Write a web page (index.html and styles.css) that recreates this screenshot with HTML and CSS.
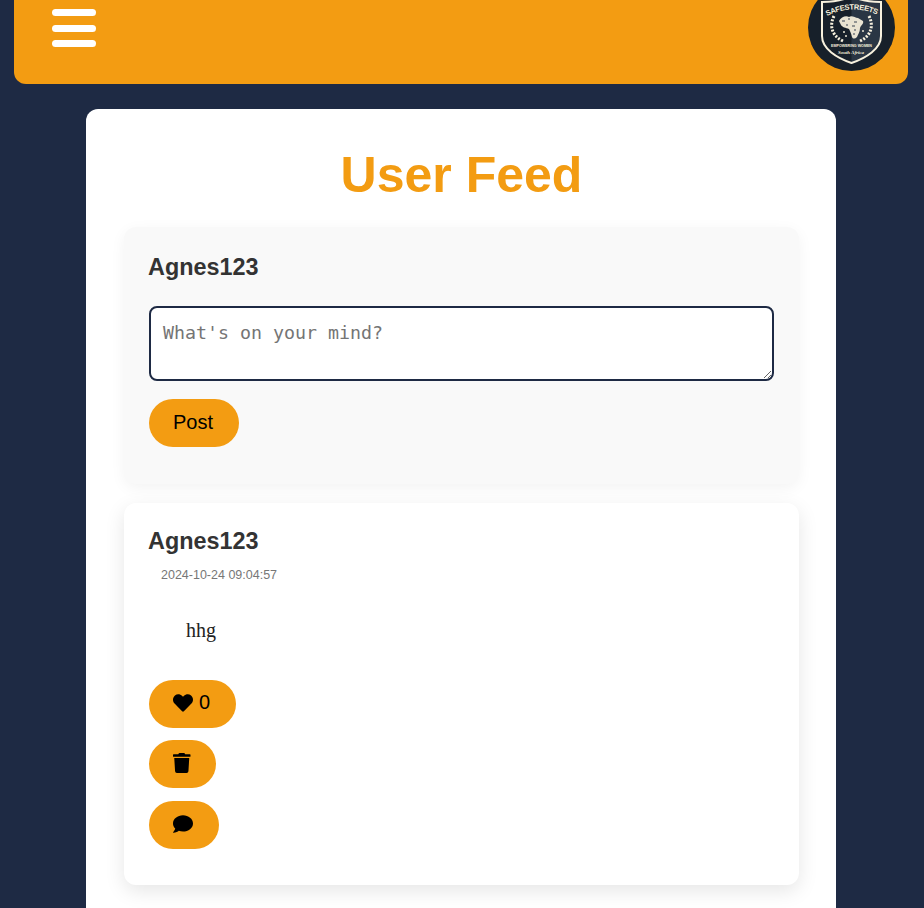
FILE: index.html
```html
<!DOCTYPE html>
<html lang="en">
<head>
<meta charset="utf-8">
<title>User Feed</title>
<link rel="stylesheet" href="styles.css">
</head>
<body>
<header class="topbar">
  <div class="burger"><span></span><span></span><span></span></div>
  <svg class="logo" viewBox="0 0 87 87">
    <defs><path id="arc" d="M17 33 Q43.500 19 70 31"/></defs>
    <circle cx="43.500" cy="43.500" r="43.500" fill="#17202a"/>
    <path d="M43.500 12 L73 18 V52 C73 65 58 74 43.500 79 Z" fill="#2a3644"/>
    <path d="M14 18 Q32 18 43.500 12 Q55 18 73 18 V52 C73 65 58 74 43.500 79 C29 74 14 65 14 52 Z" fill="none" stroke="#f7f1de" stroke-width="2"/>
    <text class="logo-title"><textPath href="#arc" startOffset="2" textLength="52" lengthAdjust="spacing">SAFESTREETS</textPath></text>
    <path d="M26 32 C21 42 24 52 35 57 M61 32 C66 42 63 52 52 57" fill="none" stroke="#f7f1de" stroke-width="3" stroke-dasharray="2 1.500"/>
    <path d="M31 37 C33 33 38 31 41 33 C44 31 47 34 50 34 L55 37 C56 40 53 41 52 44 C52 48 50 50 49 53 C47 55 45 55 44 53 C43 49 42 47 41 45 C38 44 34 43 33 41 Z" fill="#e9e3d2"/>
    <path d="M34 37 h3 M40 35 h2 M46 38 h3 M38 41 h2 M44 42 h3 M48 46 h-2 M45 50 h2" fill="none" stroke="#3b4552" stroke-width="1.200"/>
    <path d="M35 48 h2 M37 52 h2 M54 47 h2" fill="none" stroke="#e9e3d2" stroke-width="1.500"/>
    <text class="logo-small" x="23" y="63" textLength="41" lengthAdjust="spacingAndGlyphs">EMPOWERING WOMEN</text>
    <text class="logo-script" x="30" y="70" textLength="26" lengthAdjust="spacingAndGlyphs">South Africa</text>
  </svg>
</header>

<main class="panel">
  <h1 class="title">User Feed</h1>

  <section class="composer">
    <h3 class="name">Agnes123</h3>
    <textarea class="input" placeholder="What's on your mind?"></textarea>
    <button class="pill">Post</button>
  </section>

  <article class="post">
    <h3 class="name">Agnes123</h3>
    <p class="time">2024-10-24 09:04:57</p>
    <p class="body-text">hhg</p>
    <div class="actions">
      <button class="pill"><svg class="ico ico-gap" viewBox="0 0 512 512"><path d="M462.3 62.6C407.5 15.9 326 24.3 275.7 76.2L256 96.500l-19.700-20.300C186.100 24.300 104.500 15.900 49.700 62.600c-62.800 53.600-66.100 149.800-9.900 207.900l193.500 199.800c12.500 12.900 32.800 12.900 45.300 0l193.500-199.800c56.300-58.100 53-154.300-9.800-207.900z"/></svg>0</button>
      <button class="pill"><svg class="ico ico-trash" viewBox="0 0 448 512"><path d="M432 32H312l-9.400-18.700A24 24 0 0 0 281.100 0H166.800a23.720 23.720 0 0 0-21.400 13.300L136 32H16A16 16 0 0 0 0 48v32a16 16 0 0 0 16 16h416a16 16 0 0 0 16-16V48a16 16 0 0 0-16-16zM53.200 467a48 48 0 0 0 47.900 45h245.800a48 48 0 0 0 47.900-45L416 128H32z"/></svg></button>
      <button class="pill"><svg class="ico" viewBox="0 0 512 512"><path d="M256 32C114.600 32 0 125.100 0 240c0 49.600 21.400 95 57 130.700C44.500 421.100 2.700 466 2.200 466.500c-2.200 2.300-2.800 5.700-1.500 8.700S4.800 480 8 480c66.300 0 116-31.800 140.600-51.400 32.700 12.300 69 19.400 107.400 19.400 141.400 0 256-93.100 256-208S397.400 32 256 32z"/></svg></button>
    </div>
  </article>
</main>
</body>
</html>
```

FILE: styles.css
```css
* { box-sizing: border-box; }
html, body { height: 100%; }
html { background: #1e2a44; overflow: hidden; }
body {
  width: 922px;
  margin: 0;
  font-family: "Liberation Sans", Arial, sans-serif;
}
.topbar {
  display: flex;
  justify-content: space-between;
  align-items: flex-start;
  height: 84px;
  margin: 0 14px;
  padding: 0 13px 0 38px;
  background: #f39c12;
  border-radius: 0 0 12px 12px;
}
.burger {
  display: flex;
  flex-direction: column;
  gap: 8.500px;
  width: 44px;
  margin-top: 9px;
}
.burger span {
  height: 7px;
  background: #fff;
  border-radius: 4px;
}
.logo {
  width: 87px;
  height: 87px;
  margin-top: -16px;
  flex: none;
}
.logo-title { font: bold 7.500px "Liberation Sans", sans-serif; fill: #f7f1de; }
.logo-small { font: bold 3.500px "Liberation Sans", sans-serif; fill: #f7f1de; }
.logo-script { font: italic bold 4px "Liberation Serif", serif; fill: #f7f1de; }
.panel {
  width: 750px;
  margin: 25px auto 0;
  padding: 39px 37px 0 38px;
  min-height: 900px;
  background: #fff;
  border-radius: 12px;
}
.title {
  margin: 0 0 24px;
  text-align: center;
  font-size: 50px;
  line-height: 55px;
  font-weight: bold;
  color: #f39c12;
}
.composer {
  padding: 26px 25px 37px;
  margin-bottom: 19px;
  background: #f9f9f9;
  border-radius: 12px;
  box-shadow: 0 4px 15px rgba(0, 0, 0, .05);
}
.name {
  margin: 0 0 0 -1px;
  font-size: 23.400px;
  line-height: 28px;
  font-weight: bold;
  color: #333;
}
.composer .name { margin-bottom: 25px; }
.input {
  display: block;
  width: 100%;
  height: 75px;
  margin-bottom: 18px;
  padding: 12px;
  border: 2px solid #1e2a44;
  border-radius: 8px;
  background: #fff;
  font-family: "DejaVu Sans Mono", monospace;
  font-size: 18.300px;
  line-height: 26px;
}
.input::placeholder { color: #757575; }
.pill {
  display: inline-flex;
  align-items: center;
  height: 48px;
  padding: 0 25.500px 2px 24px;
  border: 0;
  border-radius: 24px;
  background: #f39c12;
  color: #000;
  font-family: inherit;
  font-size: 20px;
}
.post {
  padding: 24px 25px 36px;
  background: #fff;
  border-radius: 12px;
  box-shadow: 0 6px 20px rgba(0, 0, 0, .1);
}
.time {
  margin: 13px 0 0 12px;
  font-size: 12.500px;
  line-height: 14px;
  color: #777;
}
.body-text {
  margin: 37px 0 0 37px;
  font-family: "Liberation Serif", "Times New Roman", serif;
  font-size: 20px;
  line-height: 23px;
  color: #222;
}
.actions {
  display: flex;
  flex-direction: column;
  align-items: flex-start;
  gap: 12.500px;
  margin-top: 37.900px;
}
.ico {
  width: 20px;
  height: 20px;
  fill: #000;
}
.ico-gap { margin-right: 6px; }
.ico-trash { width: 17.500px; }
```
